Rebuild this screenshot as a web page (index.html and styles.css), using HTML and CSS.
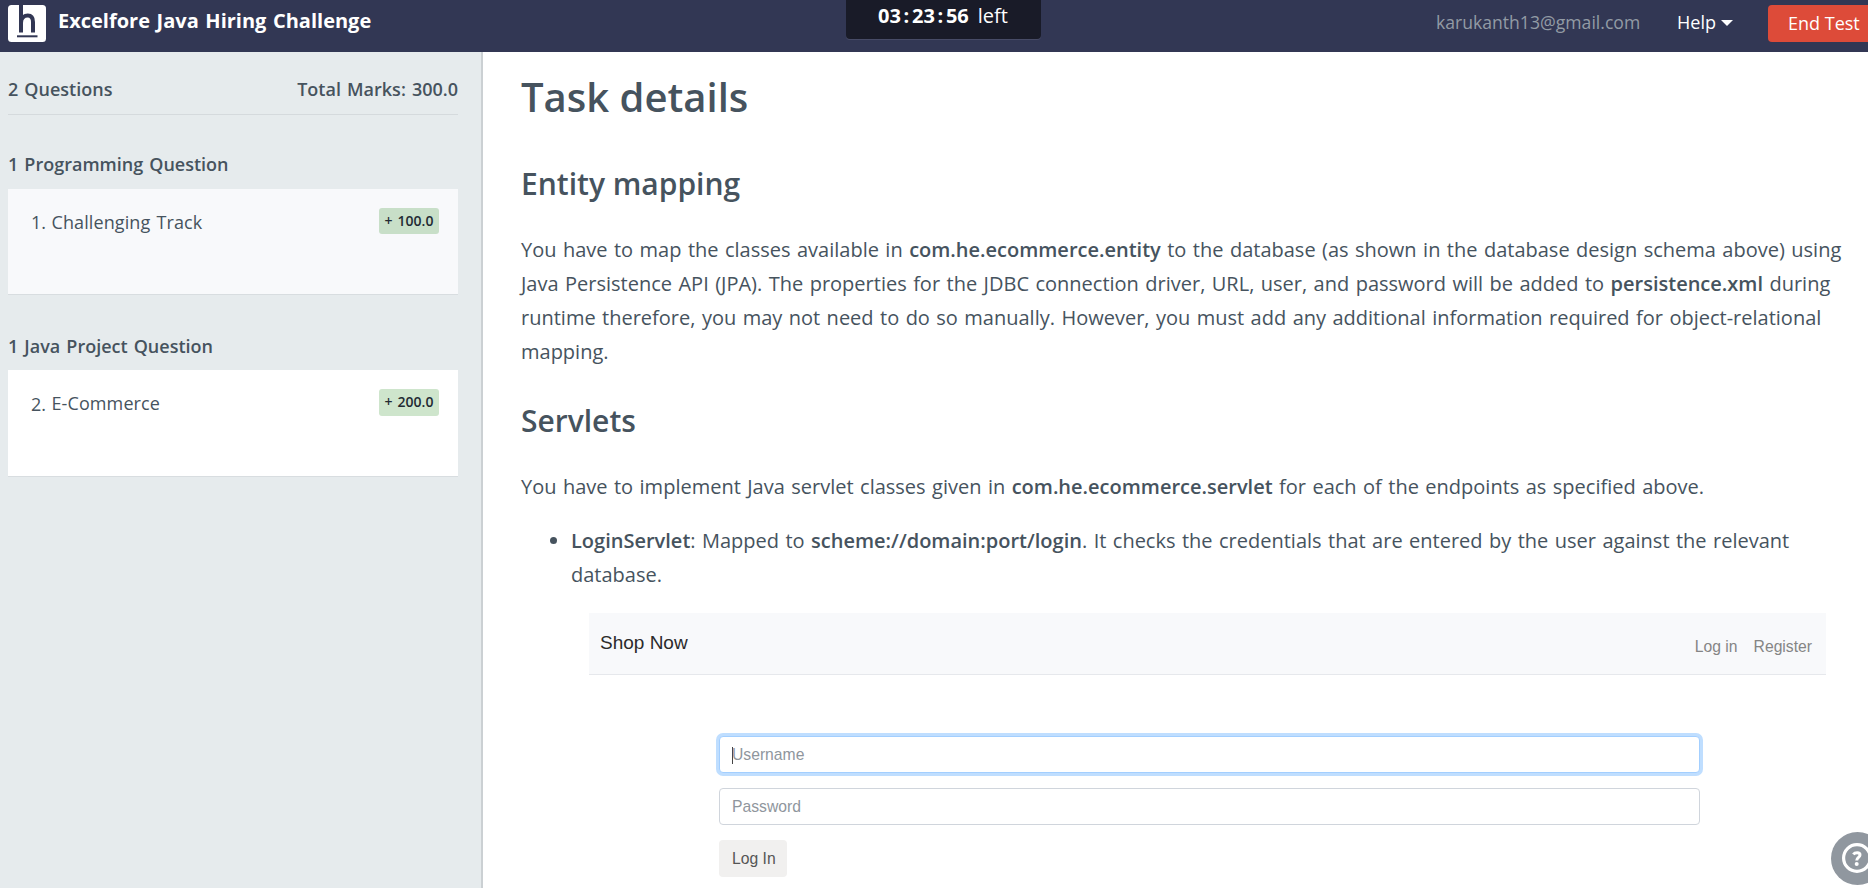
FILE: index.html
```html
<!DOCTYPE html>
<html lang="en">
<head>
<meta charset="utf-8">
<title>Excelfore Java Hiring Challenge</title>
<link rel="stylesheet" href="styles.css">
</head>
<body>
<header class="topbar">
  <div class="brand">
    <svg class="logo" width="38" height="37" viewBox="0 0 38 37">
      <rect width="38" height="37" rx="3.5" fill="#fff"/>
      <path d="M13 0V27.500M13 18C13 12 17 10.500 19.800 10.500C23.500 10.500 25 13 25 17V27.500" fill="none" stroke="#323754" stroke-width="4"/>
      <path d="M9 31.300H29.500" stroke="#323754" stroke-width="2"/>
    </svg>
    <span class="title">Excelfore Java Hiring Challenge</span>
  </div>
  <div class="timer"><b class="clock">03<i>:</i>23<i>:</i>56</b><span class="left">left</span></div>
  <nav class="account">
    <span class="email">karukanth13@gmail.com</span>
    <span class="help">Help<i class="caret"></i></span>
    <button class="end">End Test</button>
  </nav>
</header>
<div class="body">
  <aside class="sidebar">
    <div class="summary"><span class="count">2 Questions</span><span class="marks">Total Marks: 300.0</span></div>
    <h4 class="group first">1 Programming Question</h4>
    <div class="card dim"><span class="num">1.</span><span class="name">Challenging Track</span><span class="badge">+ 100.0</span></div>
    <h4 class="group second">1 Java Project Question</h4>
    <div class="card last"><span class="num two">2.</span><span class="name">E-Commerce</span><span class="badge tall">+ 200.0</span></div>
  </aside>
  <main class="content">
    <h1>Task details</h1>
    <h2>Entity mapping</h2>
    <p>You have to map the classes available in <b>com.he.ecommerce.entity</b> to the database (as shown in the database design schema above) using<br>Java Persistence API (JPA). The properties for the JDBC connection driver, URL, user, and password will be added to <b>persistence.xml</b> during<br>runtime therefore, you may not need to do so manually. However, you must add any additional information required for object-relational<br>mapping.</p>
    <h2 class="servlets">Servlets</h2>
    <p>You have to implement Java servlet classes given in <b>com.he.ecommerce.servlet</b> for each of the endpoints as specified above.</p>
    <ul class="list"><li><b>LoginServlet</b>: Mapped to <b>scheme://domain:port/login</b>. It checks the credentials that are entered by the user against the relevant<br>database.</li></ul>
    <section class="demo">
      <div class="demo-bar"><span class="shop">Shop Now</span><span class="link">Log in</span><span class="link">Register</span></div>
      <div class="form">
        <div class="field focus"><i class="cursor"></i>Username</div>
        <div class="field">Password</div>
        <div class="login">Log In</div>
      </div>
    </section>
  </main>
</div>
<div class="support">
  <svg width="53" height="53" viewBox="0 0 53 53">
    <circle cx="26.500" cy="26.500" r="26.500" fill="#90979f"/>
    <circle cx="26" cy="26" r="13.400" fill="none" stroke="#fff" stroke-width="3.200"/>
    <path d="M22.300 22.400C23.800 20.500 29 19.900 29 23C29 25.500 25.700 25.300 25.700 28.600" fill="none" stroke="#fff" stroke-width="3"/>
    <circle cx="25.700" cy="32.100" r="2" fill="#fff"/>
  </svg>
</div>
</body>
</html>
```
FILE: styles.css
```css
* { box-sizing: border-box; }
html, body { height: 100%; overflow: hidden; }
body { margin: 0; font-family: "Open Sans", sans-serif; color: #46535e; background: #fff; position: relative; }
.topbar { height: 52px; background: #323754; display: grid; grid-template-columns: 846px 195px 1fr; align-items: start; overflow: hidden; }
.brand { display: flex; gap: 12px; padding: 5px 0 0 8px; }
.title { color: #fff; font-weight: 700; font-size: 20px; word-spacing: 1.4px; line-height: 32px; white-space: nowrap; }
.timer { height: 39px; background: #191b28; border-radius: 0 0 4px 4px; box-shadow: 0 1px 0 #474b66; color: #fff; font-size: 20px; line-height: 32px; padding-left: 32px; white-space: nowrap; }
.clock { font-weight: 700; }
.clock i { font-style: normal; padding: 0 2.7px; }
.left { margin-left: 9px; }
.account { display: flex; padding-left: 395px; font-size: 18px; white-space: nowrap; color: #fff; }
.email { color: #929ba5; width: 241px; line-height: 45px; font-size: 17.6px; }
.help { width: 91px; line-height: 45px; }
.caret { display: inline-block; border: 6px solid transparent; border-top: 6px solid #fff; border-bottom: 0; margin-left: 5px; vertical-align: 3px; }
.end { margin-top: 5px; width: 120px; height: 37px; flex: none; border: 0; border-radius: 4px; background: #dd4b39; color: #fff; font: 18px "Open Sans", sans-serif; text-align: left; padding: 0 0 2px 20px; }
.body { display: grid; grid-template-columns: 483px 1fr; height: 836px; }
.sidebar { background: #e6ebed; border-right: 2px solid #cbd0d3; padding: 0 23px 0 8px; word-spacing: 1.4px; }
.summary { display: flex; justify-content: space-between; height: 63px; padding-top: 20px; border-bottom: 1px solid #d5dadd; font-weight: 600; font-size: 18px; line-height: 34px; }
.group { margin: 0; font-size: 18px; font-weight: 600; line-height: 30px; }
.first { padding-top: 34px; height: 74px; }
.second { padding-top: 36px; height: 75px; }
.card { display: flex; height: 106px; background: #fff; border-bottom: 1px solid #d8dde0; padding: 19px 19px 0 23px; font-size: 18px; line-height: 28px; }
.last { height: 107px; }
.dim { background: #f8f9fb; }
.num { width: 20.5px; }
.name { letter-spacing: 0.1px; }
.two { padding-top: 1px; }
.badge { margin-left: auto; width: 60px; height: 26px; border-radius: 3px; background: #c8dfc8; color: #222b33; font-weight: 600; font-size: 14px; line-height: 26px; text-align: center; }
.tall { height: 27px; background: #cee5cc; }
.content { padding: 18px 0 0 38px; font-size: 20px; line-height: 34px; white-space: nowrap; }
h1 { margin: 0; font-size: 40px; font-weight: 600; line-height: 54px; }
h2 { margin: 40px 0 29px; font-size: 30px; font-weight: 600; line-height: 40px; }
.servlets { margin: 32px 0 29px; }
p { margin: 0; word-spacing: 1.25px; }
b { font-weight: 600; }
.list { margin: 20px 0 0; padding-left: 50px; word-spacing: 1.25px; }
.demo { width: 1237px; margin: 21px 0 0 68px; font-family: "Liberation Sans", Arial, sans-serif; font-size: 15.7px; }
.demo-bar { height: 62px; background: #f8f9fb; border-bottom: 1px solid #e6e8ec; display: flex; gap: 16px; padding: 13px 14px 0 11px; color: #858585; line-height: 42px; }
.shop { font-size: 19px; color: #2b2b2b; margin-right: auto; line-height: 34px; }
.form { padding: 61px 126px 0 130px; color: #8f969d; }
.field { height: 37px; border: 1px solid #d0d5dc; border-radius: 4px; padding-left: 12px; line-height: 35px; margin-bottom: 15px; background: #fff; }
.cursor { display: inline-block; width: 1px; height: 17px; margin-right: -1px; background: #444; vertical-align: -4px; }
.focus { border-color: #a3cfff; box-shadow: 0 0 0 3px #bfdeff; }
.login { width: 68px; height: 37px; background: #f1f0ef; border-radius: 4px; line-height: 37px; padding-left: 13px; color: #555; }
.support { position: absolute; left: 1831px; top: 832px; width: 53px; height: 53px; }
```
